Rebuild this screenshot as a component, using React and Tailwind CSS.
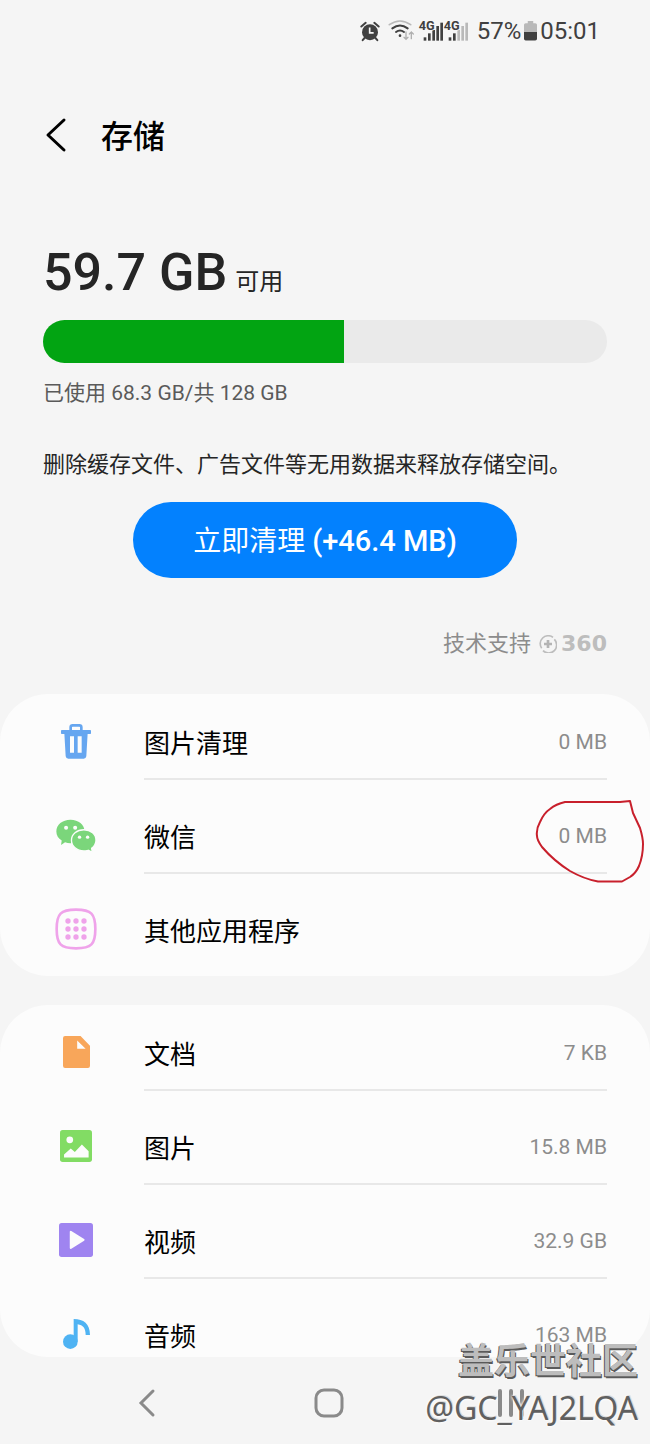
const TrashIcon = () => (
    <svg width="30" height="35" viewBox="63 44 90 105" aria-hidden="true">
        <path d="M92 68V54q0-6 6-6h20q6 0 6 6v14" fill="none" stroke="#66a6f0" strokeWidth="8" />
        <rect x="63" y="62" width="90" height="12" rx="2" fill="#66a6f0" />
        <path
            fillRule="evenodd"
            fill="#66a6f0"
            d="M73 72h70l-4 69q-1 7-8 7H85q-7 0-8-7zM90 81v49h12V81zM113 81v49h12V81z"
        />
    </svg>
);

const WechatIcon = () => (
    <svg width="40" height="33" viewBox="48 326 119 98" aria-hidden="true">
        <path fill="#7bd67b" d="M91 328c24 0 42 15 42 35s-18 35-42 35c-6 0-11-1-16-3l-12 8 2-13c-10-6-16-16-16-27 0-20 18-35 42-35z" />
        <path
            fill="#7bd67b"
            stroke="#fcfcfc"
            strokeWidth="4"
            d="M131 358c21 0 36 14 36 31 0 10-5 18-13 24l2 12-12-6c-4 1-8 2-13 2-21 0-37-14-37-32s16-31 37-31z"
        />
        <g fill="#fcfcfc">
            <circle cx="78" cy="352" r="6" />
            <circle cx="105" cy="352" r="6" />
            <circle cx="118" cy="380" r="5" />
            <circle cx="142" cy="380" r="5" />
        </g>
    </svg>
);

const AppsIcon = () => (
    <svg width="42" height="42" viewBox="44 54 126 126" fill="#efa3ea" aria-hidden="true">
        <path
            d="M107 59c46 0 58 12 58 58s-12 58-58 58-58-12-58-58 12-58 58-58z"
            fill="none"
            stroke="#efa3ea"
            strokeWidth="8"
        />
        {[93, 117, 141].map(y => [83, 107, 131].map(x => <circle key={`${x}-${y}`} cx={x} cy={y} r="8" />))}
    </svg>
);

const DocumentIcon = () => (
    <svg width="27" height="32" viewBox="68 50 80 95" aria-hidden="true">
        <path
            fillRule="evenodd"
            fill="#f8a65a"
            d="M74 50h46l28 29v60q0 6-6 6H74q-6 0-6-6V56q0-6 6-6zM110 63v25h25z"
        />
    </svg>
);

const PictureIcon = () => (
    <svg width="32" height="32" viewBox="62 331 95 95" aria-hidden="true">
        <rect x="62" y="331" width="95" height="95" rx="8" fill="#82dc64" />
        <circle cx="91" cy="360" r="10" fill="#fcfcfc" />
        <path d="M74 413v-9l20-18 12 10 21-22 20 20v19z" fill="#fcfcfc" />
    </svg>
);

const VideoIcon = () => (
    <svg width="34" height="34" viewBox="57 38 101 101" aria-hidden="true">
        <rect x="57" y="38" width="101" height="101" rx="8" fill="#9f84f0" />
        <path d="M92 64v48l38-24z" fill="#fcfcfc" stroke="#fcfcfc" strokeWidth="6" strokeLinejoin="round" />
    </svg>
);

const MusicIcon = () => (
    <svg width="27" height="30" viewBox="68 325 81 90" aria-hidden="true">
        <circle cx="90" cy="393" r="22" fill="#4fb3f3" />
        <path d="M100 325c30 0 49 14 49 48h-13c0-20-8-30-24-32v52h-12z" fill="#4fb3f3" />
    </svg>
);

const AlarmIcon = () => (
    <svg width="20" height="21" viewBox="0 0 60 60" aria-hidden="true">
        <path d="M4 15L17 4M56 15L43 4" stroke="#404040" strokeWidth="6" strokeLinecap="round" />
        <path d="M15 48l-7 8M45 48l7 8" stroke="#404040" strokeWidth="6" strokeLinecap="round" />
        <circle cx="30" cy="32" r="24" fill="#404040" />
        <path d="M29 18v16h12" fill="none" stroke="#f5f5f5" strokeWidth="5" />
    </svg>
);

const WifiIcon = () => (
    <svg width="27" height="21" viewBox="114 28 81 63" fill="none" strokeLinecap="round" aria-hidden="true">
        <path d="M118 42q32-22 64 0" stroke="#b9b9b9" strokeWidth="5" />
        <path d="M127 53q23-17 46 0" stroke="#404040" strokeWidth="6" />
        <path d="M138 64q12-9 24 0" stroke="#404040" strokeWidth="6" />
        <circle cx="150" cy="75" r="4" fill="#404040" />
        <path d="M168 64v22m-6-6l6 6 6-6M184 84V64m-6 6l6-6 6 6" stroke="#b0b0b0" strokeWidth="4" />
    </svg>
);

const bars = [
    [14, 52, 10],
    [27, 40, 22],
    [40, 30, 32],
    [52, 18, 44],
    [64, 8, 54],
];

const SignalIcon = ({ level }) => (
    <svg width="25" height="22" viewBox="0 0 75 66" className="overflow-visible" aria-hidden="true">
        {bars.map(([x, y, height], i) => (
            <rect key={x} x={x} y={y} width="8" height={height} fill={i < level ? '#404040' : '#b9b9b9'} />
        ))}
        <text
            x="-1"
            y="30"
            className="font-[Roboto] text-[38px] font-bold"
            fill="#404040"
            stroke="#f5f5f5"
            strokeWidth="5"
            paintOrder="stroke"
        >
            4G
        </text>
    </svg>
);

const BatteryIcon = () => (
    <svg width="13" height="20" viewBox="0 0 38 58" aria-hidden="true">
        <path d="M11 0h16v6h6q5 0 5 5v21H0V11q0-5 5-5h6z" fill="#b9b9b9" />
        <path d="M0 32h38v20q0 5-5 5H5q-5 0-5-5z" fill="#404040" />
    </svg>
);

const RedCircle = () => (
    <svg
        className="pointer-events-none absolute -top-6 -right-[38px]"
        width="110"
        height="84"
        viewBox="535 800 110 84"
        aria-hidden="true"
    >
        <path
            d="M565 802H620L630 801L633 813L640 828Q643 838 643 844Q643 856 639 866Q636 873 630 877L622 881.500H598Q584 879 570 871Q554 861 542 847Q537 840 537 836Q536 829 540 822Q544 813 550 809Q556 804 565 802z"
            fill="none"
            stroke="#c8202c"
            strokeWidth="2"
            strokeLinejoin="round"
        />
    </svg>
);

const cleanItems = [
    { name: '图片清理', size: '0 MB', icon: TrashIcon },
    { name: '微信', size: '0 MB', icon: WechatIcon, marked: true },
    { name: '其他应用程序', icon: AppsIcon },
];

const fileItems = [
    { name: '文档', size: '7 KB', icon: DocumentIcon },
    { name: '图片', size: '15.8 MB', icon: PictureIcon },
    { name: '视频', size: '32.9 GB', icon: VideoIcon },
    { name: '音频', size: '163 MB', icon: MusicIcon },
];

const StorageList = ({ items, className }) => (
    <ul className={`overflow-hidden rounded-[48px] bg-[#fcfcfc] px-[43px] pt-3 ${className}`}>
        {items.map(({ name, size, icon: Icon, marked }) => (
            <li key={name} className="group pt-5 first:pt-0 last:-mb-4">
                <a href="#" className="flex h-[74px] items-center">
                    <span className="mr-[35px] flex w-[66px] shrink-0 justify-center pb-1">
                        <Icon />
                    </span>
                    <span className="flex h-full flex-1 items-center justify-between border-b-2 border-[#e8e8e8] group-last:border-transparent">
                        <span className="pt-1 text-[26px] leading-8 text-black">{name}</span>
                        {size && (
                            <span className="relative text-[21px] leading-6 text-[#8c8c8c]">
                                {size}
                                {marked && <RedCircle />}
                            </span>
                        )}
                    </span>
                </a>
            </li>
        ))}
    </ul>
);

const App = () => {
    const used = 68.3;
    const total = 128;

    return (
        <div className="relative bg-[#f5f5f5] font-[Roboto,'Noto_Sans_CJK_SC',sans-serif] text-[#252525]">
            {/* Status bar */}
            <div className="flex h-[62px] items-center justify-end pr-[50px] text-2xl text-[#404040]">
                <AlarmIcon />
                <span className="ml-2 flex">
                    <WifiIcon />
                    <span className="ml-1 flex">
                        <SignalIcon level={5} />
                        <SignalIcon level={2} />
                    </span>
                </span>
                <span className="ml-2">57%</span>
                <span className="mx-[3px]">
                    <BatteryIcon />
                </span>
                <span>05:01</span>
            </div>

            <header className="flex h-[146px] items-center px-[43px]">
                <button aria-label="返回" className="mr-[34px]">
                    <svg width="24" height="36" viewBox="0 0 24 36" fill="none" aria-hidden="true">
                        <path d="M21 3L5 18l16 15" stroke="#000" strokeWidth="3" strokeLinecap="round" strokeLinejoin="round" />
                    </svg>
                </button>
                <h1 className="pt-1 text-[32px] leading-10 font-medium text-black">存储</h1>
            </header>

            <section className="px-[43px] pt-[33px]">
                <p className="flex items-baseline gap-2 leading-[64px]">
                    <span className="text-[52px] font-medium">59.7 GB</span>
                    <span className="text-2xl">可用</span>
                </p>
                <div className="mt-[15px] h-[43px] overflow-hidden rounded-full bg-[#eaeaea]">
                    <div className="h-full bg-[#02a412]" style={{ width: `${(used / total) * 100}%` }}></div>
                </div>
                <p className="mt-4 text-[21px] leading-7 text-[#5a5a5a]">
                    已使用 {used} GB/共 {total} GB
                </p>
                <p className="mt-11 text-[22px] leading-7">删除缓存文件、广告文件等无用数据来释放存储空间。</p>
                <div className="mt-[23px] flex justify-center">
                    <button className="h-[76px] rounded-full bg-[#0381fe] px-[60px] pt-1 text-[28px] text-white">
                        立即清理 <span className="text-[29px] font-medium">(+46.4 MB)</span>
                    </button>
                </div>
                <div className="mt-12 flex items-center justify-end text-[22px] leading-9 text-[#8c8c8c]">
                    技术支持
                    <svg className="mr-1 ml-2" width="18" height="18" viewBox="0 0 54 54" fill="none" aria-hidden="true">
                        <path d="M8 40A24 24 0 0 1 42 7M46 13A24 24 0 0 1 12 47" stroke="#bdbdbd" strokeWidth="5" />
                        <path d="M27 15v24M15 27h24" stroke="#b4b4b4" strokeWidth="8" />
                    </svg>
                    <span className="font-['DejaVu_Sans'] text-[22px] font-bold text-[#bdbdbd]">360</span>
                </div>
            </section>

            <StorageList items={cleanItems} className="mt-8 pb-6" />
            <StorageList items={fileItems} className="mt-[29px]" />

            {/* System navigation */}
            <nav className="flex h-[87px] items-center justify-between pt-1 pr-[124px] pl-[132px]">
                <button aria-label="后退">
                    <svg width="30" height="30" viewBox="0 0 30 30" fill="none" aria-hidden="true">
                        <path d="M21 3L9 15l12 12" stroke="#8a8a8a" strokeWidth="3" strokeLinecap="round" />
                    </svg>
                </button>
                <button aria-label="主页">
                    <svg width="30" height="30" viewBox="0 0 30 30" fill="none" aria-hidden="true">
                        <rect x="2" y="2" width="26" height="26" rx="8" stroke="#8a8a8a" strokeWidth="3" />
                    </svg>
                </button>
                <button aria-label="最近任务">
                    <svg width="30" height="30" viewBox="0 0 30 30" fill="none" aria-hidden="true">
                        <path d="M4 3v24M15 3v24M26 3v24" stroke="#8a8a8a" strokeWidth="4" strokeLinecap="round" />
                    </svg>
                </button>
            </nav>

            {/* Watermark */}
            <div className="pointer-events-none absolute right-3 bottom-4 text-right whitespace-nowrap">
                <p className="text-4xl leading-9 font-bold text-[#bdbdbd] [text-shadow:1px_2px_0_#5a5a5a,-1px_1px_0_#5a5a5a,0_0_3px_#fff]">
                    盖乐世社区
                </p>
                <p className="mt-2 font-['Noto_Sans',sans-serif] text-[32px] leading-10 text-[#606060] [text-shadow:1px_-1px_0_#ddd,0_0_3px_#fff,0_0_3px_#fff]">
                    @GC_YAJ2LQA
                </p>
            </div>
        </div>
    );
};

export default App;
